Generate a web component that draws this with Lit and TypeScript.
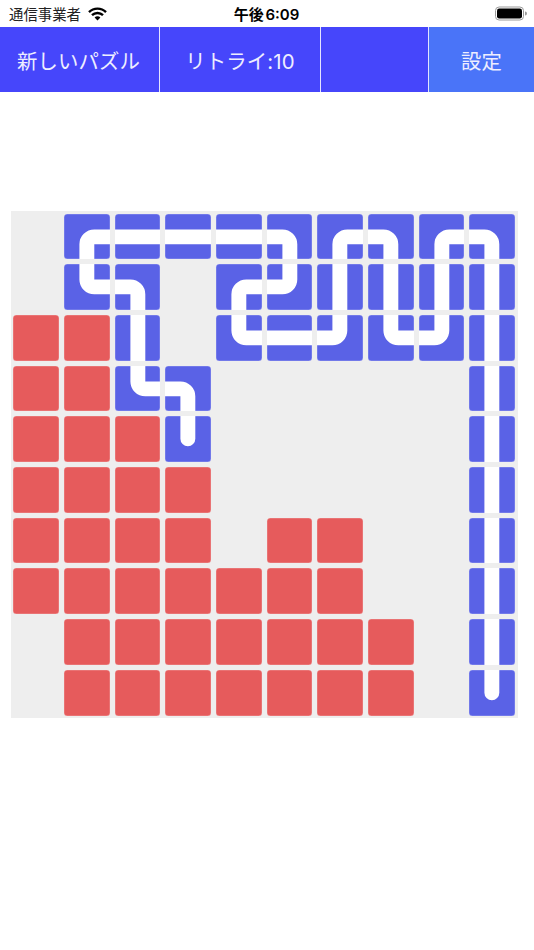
import { LitElement, html, css, svg } from "lit";
import { customElement } from "lit/decorators.js";

const PATHS: Record<string, string> = {
  LR: "M-1 23H47",
  TB: "M23 -1V47",
  RB: "M47 23H30.5A7.5 7.5 0 0 0 23 30.5V47",
  LB: "M-1 23H15.5A7.5 7.5 0 0 1 23 30.5V47",
  TR: "M23 -1V15.5A7.5 7.5 0 0 0 30.5 23H47",
  LT: "M-1 23H15.5A7.5 7.5 0 0 0 23 15.5V-1",
  T: "M23 -1V23",
};

const BOARD: string[][] = [
  ["", "RB", "LR", "LR", "LR", "LB", "RB", "LB", "RB", "LB"],
  ["", "TR", "LB", "", "RB", "LT", "TB", "TB", "TB", "TB"],
  ["r", "r", "TB", "", "TR", "LR", "LT", "TR", "LT", "TB"],
  ["r", "r", "TR", "LB", "", "", "", "", "", "TB"],
  ["r", "r", "r", "T", "", "", "", "", "", "TB"],
  ["r", "r", "r", "r", "", "", "", "", "", "TB"],
  ["r", "r", "r", "r", "", "r", "r", "", "", "TB"],
  ["r", "r", "r", "r", "r", "r", "r", "", "", "TB"],
  ["", "r", "r", "r", "r", "r", "r", "r", "", "TB"],
  ["", "r", "r", "r", "r", "r", "r", "r", "", "T"],
];

@customElement("app-root")
export class AppRoot extends LitElement {
  static styles = css`
    :host {
      display: block;
      width: 534px;
      height: 950px;
      background: #fff;
      font-family: "Noto Sans CJK JP", "Noto Sans", sans-serif;
      overflow: hidden;
    }
    .status {
      height: 27px;
      display: grid;
      grid-template-columns: 1fr auto 1fr;
      align-items: center;
      padding: 0 7px 0 9px;
      color: #000;
    }
    .left {
      display: flex;
      align-items: center;
      gap: 7px;
      font-size: 14.4px;
      color: #222;
    }
    .time {
      font-family: Inter, "Noto Sans CJK JP", sans-serif;
      font-size: 15px;
      font-weight: 600;
      word-spacing: -2px;
      margin-right: 3px;
    }
    .right {
      display: flex;
      justify-content: flex-end;
    }
    .bar {
      display: grid;
      grid-template-columns: 160px 161px 108px 1fr;
      height: 65px;
      background: #fff;
    }
    .btn {
      display: flex;
      align-items: center;
      justify-content: center;
      background: #4646fb;
      color: #eeeeff;
      font-family: Inter, "Noto Sans CJK JP", sans-serif;
      font-size: 20.4px;
      font-weight: 400;
      letter-spacing: 0.15px;
      border-right: 1.5px solid #e4e4ff;
    }
    .btn.first {
      padding-right: 2px;
    }
    .btn.settings {
      background: #4a74f8;
      border-right: 0;
    }
    .board {
      width: 507px;
      height: 507px;
      margin: 119px 0 0 10.7px;
      background: #eeeeee;
      display: grid;
      grid-template-columns: repeat(10, 1fr);
      grid-template-rows: repeat(10, 1fr);
    }
    .tile {
      margin: 2.5px;
      border-radius: 3.5px;
      overflow: hidden;
      box-shadow: inset 0 0 0 0.5px rgba(255, 255, 255, 0.3);
    }
    .tile svg {
      display: block;
      width: 100%;
      height: 100%;
    }
    .pipe {
      background: #5a62e6;
    }
    .red {
      background: #e65b5c;
    }
  `;

  private tile(code: string) {
    if (!code) return html`<div></div>`;
    if (code === "r") return html`<div class="tile red"></div>`;
    return html`<div class="tile pipe">
      <svg viewBox="0 0 46 46">
        ${svg`<path d=${PATHS[code]} fill="none" stroke="#fff" stroke-width="15" stroke-linecap="round"></path>`}
      </svg>
    </div>`;
  }

  render() {
    return html`
      <div class="status">
        <div class="left">
          <span>通信事業者</span>
          <svg width="19" height="14" viewBox="0 0 19 14">
            <path d="M1 5.2A12 12 0 0 1 18 5.2" fill="none" stroke="#000" stroke-width="2.4"></path>
            <path d="M4 8.2A7.8 7.8 0 0 1 15 8.2" fill="none" stroke="#000" stroke-width="2.4"></path>
            <path d="M6.6 10.6L9.5 13.6L12.4 10.6A4 4 0 0 0 6.6 10.6Z" fill="#000"></path>
          </svg>
        </div>
        <div class="time">午後 6:09</div>
        <div class="right">
          <svg width="32" height="15" viewBox="0 0 32 15">
            <rect x="0.5" y="1" width="28" height="13" rx="3.6" fill="none" stroke="#9a9a9a"></rect>
            <rect x="2" y="2.5" width="25" height="10" rx="2.2" fill="#000"></rect>
            <path d="M30 5.5A2 2 0 0 1 30 9.5Z" fill="#9a9a9a"></path>
          </svg>
        </div>
      </div>
      <div class="bar">
        <div class="btn first">新しいパズル</div>
        <div class="btn">リトライ:10</div>
        <div class="btn"></div>
        <div class="btn settings">設定</div>
      </div>
      <div class="board">${BOARD.flat().map((c) => this.tile(c))}</div>
    `;
  }
}
